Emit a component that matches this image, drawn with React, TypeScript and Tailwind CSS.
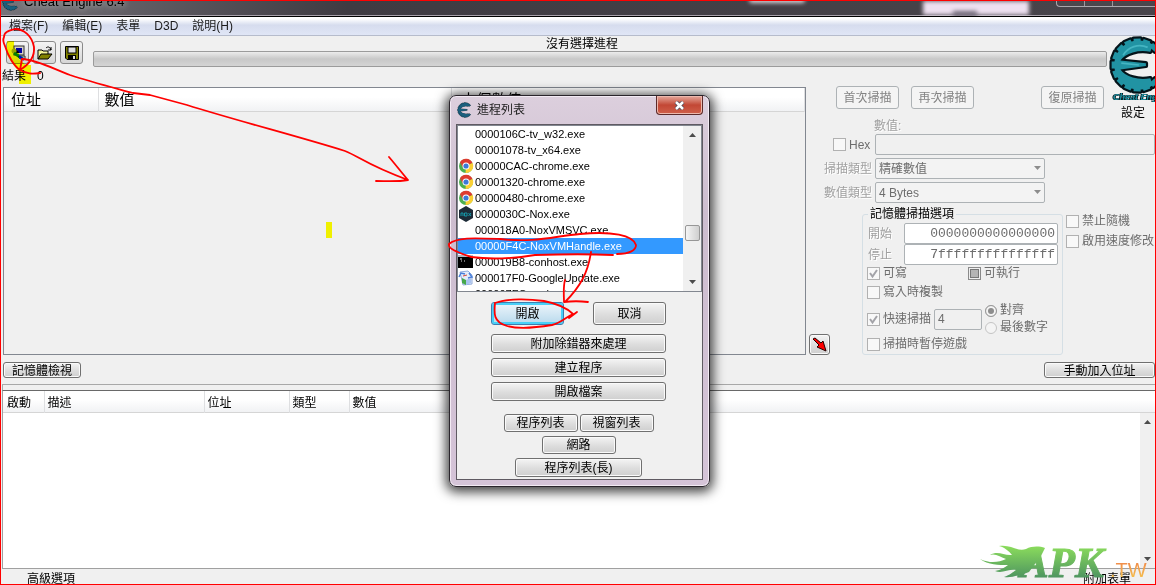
import { useState, type ReactNode } from "react";

type Process = {
  label: string;
  icon?: "chrome" | "nox" | "console" | "update";
};

const processes: Process[] = [
  { label: "0000106C-tv_w32.exe" },
  { label: "00001078-tv_x64.exe" },
  { label: "00000CAC-chrome.exe", icon: "chrome" },
  { label: "00001320-chrome.exe", icon: "chrome" },
  { label: "00000480-chrome.exe", icon: "chrome" },
  { label: "0000030C-Nox.exe", icon: "nox" },
  { label: "000018A0-NoxVMSVC.exe" },
  { label: "00000F4C-NoxVMHandle.exe" },
  { label: "000019B8-conhost.exe", icon: "console" },
  { label: "000017F0-GoogleUpdate.exe", icon: "update" },
  { label: "000007FC-svchost.exe" },
];

const buttonBase =
  "rounded-[3px] border border-[#707070] bg-linear-to-b from-[#f4f4f4] from-0% via-[#dddddd] via-55% to-[#cfcfcf] text-center leading-4 text-black shadow-[inset_0_0_0_1px_#fafafa]";

function GearLogo({ className, dark }: { className: string; dark?: boolean }) {
  const teeth = Array.from({ length: 13 }, (_, i) => 48 + i * 22);
  const fill = dark ? "#1b5f7d" : "#2193a3";
  const ring = "M50 10 A28 28 0 1 0 50 56 L47 48 A28 18 0 0 1 13 38 L42 34 L42 31 L13 28 A28 18 0 0 1 47 18 Z";
  return (
    <svg className={className} viewBox="0 0 66 66" aria-hidden="true">
      <g stroke="#05141a" strokeWidth={dark ? 2 : 5} strokeLinejoin="round" fill={fill}>
        {teeth.map((a) => (
          <rect key={a} x="57" y="29" width="6" height="8" transform={`rotate(${a} 33 33)`} />
        ))}
        <path d={ring} />
      </g>
      <g fill={fill}>
        {teeth.map((a) => (
          <rect key={a} x="57" y="29" width="6" height="8" transform={`rotate(${a} 33 33)`} />
        ))}
        <path d={ring} />
      </g>
      {!dark && <path d="M16 22 A22 22 0 0 1 44 13 M14 31 L34 33" fill="none" stroke="#45b5c2" strokeWidth="2" />}
    </svg>
  );
}

function ProcessIcon({ icon }: { icon?: Process["icon"] }) {
  if (icon === "chrome") {
    return (
      <svg className="size-4" viewBox="0 0 16 16" aria-hidden="true">
        <circle cx="8" cy="8" r="7" fill="#4caf50" />
        <path d="M8 8 L1.9 4.5 A7 7 0 0 1 14.5 5 Z" fill="#de3b30" />
        <path d="M8 8 L14.5 5 A7 7 0 0 1 7.5 15 Z" fill="#fbd034" />
        <path d="M2 4.500 L5 9.500 L8 8 Z" fill="#de3b30" />
        <circle cx="8" cy="8" r="3.500" fill="#fff" />
        <circle cx="8" cy="8" r="2.600" fill="#3b79d8" />
      </svg>
    );
  }
  if (icon === "nox") {
    return (
      <svg className="size-4" viewBox="0 0 16 16" aria-hidden="true">
        <path d="M8 0 L15 4 V12 L8 16 L1 12 V4 Z" fill="#1d2b37" />
        <path d="M3 10 V7 H5 V10 M6.500 7 H9 V10 H6.500 Z M10.500 7 L13 10 M13 7 L10.500 10" fill="none" stroke="#1597a8" strokeWidth="1" />
      </svg>
    );
  }
  if (icon === "console") {
    return (
      <svg className="size-4" viewBox="0 0 16 16" aria-hidden="true">
        <rect x="0" y="2" width="15" height="12" fill="#000" />
        <rect x="0" y="1" width="15" height="2" fill="#aeb9c6" />
        <path d="M2 5 H4 M3 7 H4 M6 7 H7" stroke="#ddd" />
      </svg>
    );
  }
  if (icon === "update") {
    return (
      <svg className="size-4" viewBox="0 0 16 16" aria-hidden="true">
        <path d="M2 2 L10 1 L14 5 V14 L5 15 Z" fill="#e3ecfa" stroke="#8fabdd" />
        <path d="M1 7 L3 3 L7 4 M11 3 L14 7 L10 8" fill="none" stroke="#4a7fd8" strokeWidth="1.500" />
        <path d="M4 8 L8 10 V15 L4 13 Z" fill="#46a84a" />
        <path d="M8 10 L13 8 V13 L8 15 Z" fill="#a9c3f0" />
        <path d="M5 6 L9 5" stroke="#d64a3a" />
      </svg>
    );
  }
  return <span className="size-4" />;
}

function Check({
  children,
  mark,
}: {
  children: ReactNode;
  mark?: "check" | "filled";
}) {
  return (
    <label className="flex h-4 items-center gap-[3px] whitespace-nowrap text-[#6d6d6d]">
      <span className="relative size-[13px] shrink-0">
        <input
          type="checkbox"
          disabled
          checked={mark === "check"}
          readOnly
          className="block size-[13px] appearance-none border border-[#b1b1b1] bg-[#f8f8f8]"
        />
        {mark === "check" && (
          <svg className="absolute inset-0" viewBox="0 0 13 13" aria-hidden="true">
            <path d="M3 6 L5.500 9.500 L10 3" fill="none" stroke="#a3a3a8" strokeWidth="2" />
          </svg>
        )}
        {mark === "filled" && (
          <svg className="absolute inset-0" viewBox="0 0 13 13" aria-hidden="true">
            <rect x="0.500" y="0.500" width="12" height="12" fill="#eee" stroke="#8a8a8a" />
            <rect x="2.500" y="2.500" width="8" height="8" fill="#b4b4b4" stroke="#777" />
          </svg>
        )}
      </span>
      {children}
    </label>
  );
}

function ScanRadio({ children, checked }: { children: ReactNode; checked?: boolean }) {
  return (
    <label className="flex items-center gap-[3px] whitespace-nowrap leading-[17px] text-[#6d6d6d]">
      <span className="relative size-3">
        <input
          type="radio"
          name="alignment"
          disabled
          checked={!!checked}
          readOnly
          className="block size-3 appearance-none rounded-full border border-[#c4c4c4] bg-[#f4f4f4]"
        />
        {checked && (
          <svg className="absolute inset-0" viewBox="0 0 12 12" aria-hidden="true">
            <circle cx="6" cy="6" r="5.500" fill="none" stroke="#999" />
            <circle cx="6" cy="6" r="3" fill="#8d8d8d" />
          </svg>
        )}
      </span>
      {children}
    </label>
  );
}

function ScanSelect({ id, value }: { id: string; value: string }) {
  return (
    <div className="relative w-[170px]">
      <select
        id={id}
        disabled
        className="block h-[21px] w-full appearance-none rounded-[2px] border border-[#adb2b5] bg-[#f3f3f3] px-[3px] text-[#6d6d6d] opacity-100"
      >
        <option>{value}</option>
      </select>
      <svg className="absolute right-1 top-2 h-1 w-[7px]" viewBox="0 0 7 4" aria-hidden="true">
        <path d="M0 0 H7 L3.500 4 Z" fill="#8c8c8c" />
      </svg>
    </div>
  );
}

function ScrollArrow({ up }: { up?: boolean }) {
  return (
    <svg className="h-1 w-[7px]" viewBox="0 0 7 4" aria-hidden="true">
      <path d={up ? "M0 4 H7 L3.500 0 Z" : "M0 0 H7 L3.500 4 Z"} fill="#4c4c4c" />
    </svg>
  );
}

function TitleBar() {
  return (
    <header className="relative flex h-4 items-start justify-between overflow-hidden border-b border-black bg-linear-to-r from-[#77747a] via-[#3f3b42] via-30% to-[#49454b] shadow-[inset_0_-1px_0_#a9a2ab]">
      <div className="-mt-2 flex items-center gap-1 pl-px">
        <GearLogo className="size-[18px]" dark />
        <span className="text-[13px] leading-4 text-black [text-shadow:0_0_6px_#bbb,0_0_10px_#999]">Cheat Engine 6.4</span>
      </div>
      <div className="absolute -top-1 right-[350px] h-1.5 w-14 rounded-full bg-[#d8d2d8] blur-[2px]" />
      <div className="absolute right-[126px] top-0 h-[14px] w-[106px] bg-[#eee0f0] blur-[2px]" />
      <div className="absolute right-[178px] top-2.5 h-1.5 w-6 bg-[#756d7c] blur-[2px]" />
      <div className="flex h-1.5 w-[99px] divide-x divide-[#9c989e] rounded-bl border border-r-0 border-t-0 border-[#aaa6ac] bg-[#4b474d]">
        <button type="button" aria-label="最小化" className="w-7" />
        <button type="button" aria-label="最大化" className="w-7" />
        <button type="button" aria-label="關閉" className="flex-1" />
      </div>
    </header>
  );
}

function MenuBar() {
  return (
    <nav className="flex h-[19px] items-center gap-[14px] border-b border-[#b6bccc] bg-linear-to-b from-white from-10% via-[#d6dcee] via-45% to-[#e0e6f6] pl-2 text-[#1b1b1b]">
      <a href="#file">檔案(F)</a>
      <a href="#edit">編輯(E)</a>
      <a href="#table">表單</a>
      <a href="#d3d">D3D</a>
      <a href="#help">說明(H)</a>
    </nav>
  );
}

function ToolBar() {
  const tool =
    "flex size-[23px] items-center justify-center rounded-[3px] border border-[#8a8a8a] bg-linear-to-b from-[#f4f4f4] to-[#d6d6d6]";
  return (
    <div className="col-span-2 h-[49px] pl-px">
      <div className="flex pl-1 pt-[5px]">
        <div className="flex gap-1">
          <button type="button" aria-label="開啟程序" className={tool}>
            <svg className="size-4" viewBox="0 0 16 16" aria-hidden="true">
              <rect x="4" y="1" width="10" height="9" fill="#d4d0c8" stroke="#333" />
              <rect x="6" y="3" width="6" height="5" fill="#0000a0" />
              <path d="M7 11 H15 V14 H10 Z" fill="#d4d0c8" stroke="#333" />
              <circle cx="4" cy="6" r="2.500" fill="#9aa51b" />
              <path d="M4 8 L13 14" stroke="#008080" strokeWidth="3" />
              <path d="M9 11 L14 15" stroke="#0000c0" strokeWidth="2" />
            </svg>
          </button>
          <button type="button" aria-label="開啟檔案" className={tool}>
            <svg className="size-4" viewBox="0 0 16 16" aria-hidden="true">
              <path d="M1 14 V5 H5 L6 6 H11 V9" fill="#f5f59a" stroke="#000" />
              <path d="M1 14 L4 9 H15 L11 14 Z" fill="#808000" stroke="#000" />
              <path d="M9 3 C11 1 13 2 14 5 M14 2 V5 H11" fill="none" stroke="#000" />
            </svg>
          </button>
          <button type="button" aria-label="儲存" className={tool}>
            <svg className="size-4" viewBox="0 0 16 16" aria-hidden="true">
              <path d="M1.500 1.500 H14.500 V14.500 H3 L1.500 13 Z" fill="#808000" stroke="#000" />
              <rect x="4" y="2" width="8" height="6" fill="#dedede" stroke="#000" />
              <rect x="4" y="10" width="8" height="4" fill="#000" />
              <rect x="9" y="11" width="2" height="3" fill="#ddd" />
            </svg>
          </button>
        </div>
        <div className="ml-[10px] flex-1">
          <p className="-mt-1 pr-9 text-center leading-[14px]">沒有選擇進程</p>
          <div
            role="progressbar"
            aria-label="掃描進度"
            className="h-4 rounded-[2px] border border-[#9b9b9b] bg-linear-to-b from-[#ececec] via-[#c8c8c8] via-50% to-[#d4d4d4]"
          />
        </div>
      </div>
      <p className="flex gap-[11px] pt-px leading-4">
        <span>結果</span>
        <span>0</span>
      </p>
    </div>
  );
}

function ScanForm() {
  return (
    <section className="col-span-2 pt-px leading-4 text-[#a0a0a0]">
      <label htmlFor="scan-value" className="block pl-11 [text-shadow:1px_1px_0_#fff]">
        數值:
      </label>
      <div className="flex items-center gap-[6px] pl-[3px]">
        <div className="w-9">
          <Check>Hex</Check>
        </div>
        <input id="scan-value" disabled className="h-[21px] min-w-0 flex-1 rounded-[2px] border border-[#adb2b5] bg-[#f0f0f0]" />
      </div>
      <div className="mt-[3px] grid grid-cols-[45px_170px] gap-y-[3px]">
        <label htmlFor="scan-type" className="-ml-2 self-center whitespace-nowrap pr-[3px] text-right [text-shadow:1px_1px_0_#fff]">
          掃描類型
        </label>
        <ScanSelect id="scan-type" value="精確數值" />
        <label htmlFor="value-type" className="-ml-2 self-center whitespace-nowrap pr-[3px] text-right [text-shadow:1px_1px_0_#fff]">
          數值類型
        </label>
        <ScanSelect id="value-type" value="4 Bytes" />
      </div>

      <div className="flex gap-[3px] pl-8 pt-[2px]">
        <fieldset className="h-[150px] w-[201px] shrink-0 rounded-[3px] border border-[#d5dfe5] px-1">
          <legend className="ml-px px-[2px] leading-[18px] text-black">記憶體掃描選項</legend>
          <div className="grid grid-cols-[37px_1fr] items-center [text-shadow:1px_1px_0_#fff]">
            <label htmlFor="range-start" className="pl-px">開始</label>
            <input
              id="range-start"
              disabled
              defaultValue="0000000000000000"
              className="h-[21px] w-full rounded-[2px] border border-[#adb2b5] bg-white px-[2px] text-right font-['Liberation_Mono',monospace] text-[13px] text-[#6d6d6d]"
            />
            <label htmlFor="range-stop" className="pl-px">停止</label>
            <input
              id="range-stop"
              disabled
              defaultValue="7fffffffffffffff"
              className="h-[21px] w-full rounded-[2px] border border-[#adb2b5] bg-white px-[2px] text-right font-['Liberation_Mono',monospace] text-[13px] text-[#6d6d6d]"
            />
          </div>
          <div className="grid grid-cols-[101px_1fr]">
            <Check mark="check">可寫</Check>
            <Check mark="filled">可執行</Check>
          </div>
          <div className="mt-[3px]">
            <Check>寫入時複製</Check>
          </div>
          <div className="flex items-center gap-[3px] pt-[2px]">
            <Check mark="check">快速掃描</Check>
            <input
              aria-label="快速掃描對齊值"
              disabled
              defaultValue="4"
              className="h-[21px] w-12 rounded-[2px] border border-[#adb2b5] bg-[#f0f0f0] px-[3px] text-[#6d6d6d]"
            />
            <div>
              <ScanRadio checked>對齊</ScanRadio>
              <ScanRadio>最後數字</ScanRadio>
            </div>
          </div>
          <Check>掃描時暫停遊戲</Check>
        </fieldset>
        <div className="flex flex-col gap-1 pt-2">
          <Check>禁止隨機</Check>
          <Check>啟用速度修改</Check>
        </div>
      </div>
    </section>
  );
}

function ProcessDialog() {
  const [selected, setSelected] = useState("00000F4C-NoxVMHandle.exe");

  return (
    <div
      role="dialog"
      aria-label="進程列表"
      className="absolute left-[448px] top-[94px] w-[261px] rounded-[7px] border border-[#2a252c] bg-linear-to-b from-[#dccfdd] via-[#cdbdcf] via-30% to-[#d5c4d8] px-[6px] pb-[6px] shadow-[0_2px_12px_3px_rgba(0,0,0,0.75),inset_0_0_0_1px_#f3ebf4]"
    >
      <div className="flex h-7 items-center gap-1 pl-px text-[#1d1d1d]">
        <GearLogo className="size-4" dark />
        <span>進程列表</span>
        <button
          type="button"
          aria-label="關閉"
          className="ml-auto flex h-[19px] w-[47px] items-center justify-center self-start rounded-b-[4px] border border-t-0 border-[#5c2a2a] bg-linear-to-b from-[#e3a79c] via-[#c24735] via-50% to-[#d0604a] shadow-[inset_0_0_0_1px_#edb8ac]"
        >
          <svg className="h-[9px] w-[11px]" viewBox="0 0 11 9" aria-hidden="true">
            <path d="M2 1 L9 8 M9 1 L2 8" stroke="#4d4a58" strokeWidth="4" />
            <path d="M2 1 L9 8 M9 1 L2 8" stroke="#fff" strokeWidth="2.500" />
          </svg>
        </button>
      </div>

      <div className="border border-[#5f5a62] bg-[#f0f0f0] pb-[2px]">
        <div className="flex h-[167px] overflow-hidden border border-[#828790] bg-white">
          <ul role="listbox" aria-label="進程列表" className="flex-1 overflow-hidden">
            {processes.map((p) => (
              <li
                key={p.label}
                role="option"
                aria-selected={p.label === selected}
                onClick={() => setSelected(p.label)}
                className={
                  p.label === selected
                    ? "flex h-4 items-center gap-px bg-[#3399ff] text-[11px] text-white"
                    : "flex h-4 items-center gap-px text-[11px] text-black"
                }
              >
                <ProcessIcon icon={p.icon} />
                {p.label}
              </li>
            ))}
          </ul>
          <div className="flex w-[18px] flex-col items-center bg-[#f0f0f0] py-[7px]">
            <ScrollArrow up />
            <div className="mt-[88px] h-4 w-[15px] rounded-[2px] border border-[#979797] bg-linear-to-r from-[#f5f5f5] to-[#cfcfcf]" />
            <div className="mt-auto">
              <ScrollArrow />
            </div>
          </div>
        </div>

        <div className="flex flex-col items-center pr-[2px]">
          <div className="flex w-[175px] flex-col gap-[5px] pt-[10px]">
            <div className="mb-1 flex justify-between">
              <button
                type="button"
                className="h-[23px] w-[73px] rounded-[3px] border border-[#3c7fb1] bg-linear-to-b from-[#eef6fb] via-[#d0e6f3] via-55% to-[#b8d9ec] leading-4 text-black shadow-[inset_0_0_0_2px_#48d0f8]"
              >
                開啟
              </button>
              <button type="button" className={`h-[23px] w-[73px] ${buttonBase}`}>取消</button>
            </div>
            <button type="button" className={`h-[19px] ${buttonBase}`}>附加除錯器來處理</button>
            <button type="button" className={`h-[19px] ${buttonBase}`}>建立程序</button>
            <button type="button" className={`h-[19px] ${buttonBase}`}>開啟檔案</button>
          </div>
          <div className="flex flex-col items-center gap-1 pt-[13px]">
            <div className="flex gap-[2px]">
              <button type="button" className={`h-[18px] w-[74px] ${buttonBase}`}>程序列表</button>
              <button type="button" className={`h-[18px] w-[74px] ${buttonBase}`}>視窗列表</button>
            </div>
            <button type="button" className={`h-[18px] w-[74px] ${buttonBase}`}>網路</button>
            <button type="button" className={`h-[19px] w-[127px] ${buttonBase}`}>程序列表(長)</button>
          </div>
        </div>
      </div>
    </div>
  );
}

function Watermark() {
  return (
    <svg className="pointer-events-none absolute bottom-0 right-0 h-10 w-[176px]" viewBox="0 0 176 40" aria-label="APK.TW">
      <defs>
        <linearGradient id="apk" gradientUnits="userSpaceOnUse" x1="0" y1="2" x2="0" y2="34">
          <stop offset="0" stopColor="#8bdc5c" />
          <stop offset="1" stopColor="#4d9460" />
        </linearGradient>
        <linearGradient id="tw" gradientUnits="userSpaceOnUse" x1="0" y1="18" x2="0" y2="34">
          <stop offset="0" stopColor="#f08a4b" />
          <stop offset="1" stopColor="#f5c04c" />
        </linearGradient>
      </defs>
      <path
        d="M1 15 C12 20 20 18 27 15 C22 13 16 9 11 11 C19 6 25 12 33 11 C30 7 25 3 20 2 C32 0 38 8 47 5 C53 2 60 2 66 4 L62 12 L50 28 L42 31 C36 32 31 34 25 33 C31 31 34 28 37 26 C29 25 23 30 16 27 C22 26 26 23 29 21 C20 21 9 21 1 15 Z"
        fill="url(#apk)"
      />
      <text x="41" y="33" fill="url(#apk)" stroke="url(#apk)" strokeWidth="1" className="font-['Liberation_Serif',serif] text-[43px] font-bold italic">
        APK
      </text>
      <text x="131" y="33" fill="url(#tw)" className="font-['Liberation_Sans',sans-serif] text-[20px]">
        .TW
      </text>
    </svg>
  );
}

function Markup() {
  return (
    <svg className="pointer-events-none absolute left-0 top-0 h-[585px] w-[1156px] mix-blend-multiply" viewBox="1 1 1156 585" aria-hidden="true">
      <g fill="#ffff00">
        <path d="M7 41 H14 V48 L19 52 V59 L26 65 H31 V84 H19 V72 L12 63 L7 55 Z" />
        <rect x="326" y="222" width="6" height="16" />
      </g>
    </svg>
  );
}

function Strokes() {
  return (
    <svg className="pointer-events-none absolute left-0 top-0 h-[585px] w-[1156px]" viewBox="1 1 1156 585" aria-hidden="true">
      <g fill="none" stroke="#f00" strokeWidth="1.800" strokeLinecap="round" strokeLinejoin="round">
        <path d="M4 37 C4 32 8 31 15 29 C24 29 32 36 34 47 C35 57 28 65 20 70 C14 66 8 56 5 46 C3 42 3 39 4 37 M20 70 L22 59 M20 70 C27 74 32 74 40 73" />
        <path d="M22 59 C35 59 54 69 70 75 C91 82 111 87 133 93 L150 95 L187 105 C238 121 297 136 345 151 C360 157 367 165 408 180 M389 157 C395 164 402 173 408 180 M408 180 C397 182 386 181 376 181" />
        <path d="M471 257 C457 252 448 249 449 244 C456 237 475 238 500 239 C535 243 555 236 580 234 C612 231 633 235 636 245 C636 250 630 254 617 254 M613 255 C592 254 565 254 535 255 C510 259 486 259 471 257" />
        <path d="M591 252 C588 273 580 287 565 302 M565 280 C563 287 564 296 564 302 C572 301 580 301 588 302" />
        <path d="M495 303 C508 298 530 299 544 301 C559 304 568 309 573 314 C566 317 561 323 552 325 C534 328 518 329 507 326 C493 322 494 313 495 303 M569 318 L577 312" />
      </g>
    </svg>
  );
}

export default function App() {
  const head = "border-r border-[#dedfe1] text-left font-normal";
  return (
    <main className="relative flex min-h-screen flex-col overflow-hidden border border-[#f00] bg-[#f0f0f0] font-['Liberation_Sans','Noto_Sans_CJK_TC',sans-serif] text-xs text-black">
      <TitleBar />
      <MenuBar />

      <div className="grid grid-cols-[1fr_277px_48px] grid-rows-[49px_32px_auto]">
        <ToolBar />
        <a href="#settings" className="row-span-2 flex h-[81px] flex-col items-start pl-[2px]">
          <GearLogo className="size-[58px] shrink-0" />
          <span className="-mt-px ml-1 whitespace-nowrap text-[9px] font-bold italic leading-[9px] text-[#16899a] [text-shadow:1px_0_#061a20,-1px_0_#061a20]">
            Cheat Engine
          </span>
          <span className="ml-3 mt-[3px] leading-4">設定</span>
        </a>

        <div className="row-span-2 flex items-end gap-[3px] pl-[2px]">
          <div className="h-[268px] flex-1 border border-[#828790]">
            <table className="w-full table-fixed border-collapse bg-linear-to-b from-white from-40% to-[#f1f2f4]">
              <thead>
                <tr className="h-[23px] border-b border-[#d5d5d5] text-[15px] leading-5">
                  <th className={`w-[94px] pl-[7px] pt-px ${head}`}>位址</th>
                  <th className={`w-[353px] pl-[6px] pt-px ${head}`}>數值</th>
                  <th className={`pl-[10px] pt-px ${head}`}>上個數值</th>
                </tr>
              </thead>
            </table>
          </div>
          <button type="button" aria-label="加入選取位址" className={`flex size-[21px] items-center justify-center ${buttonBase}`}>
            <svg className="size-[15px]" viewBox="0 0 15 15" aria-hidden="true">
              <path d="M1 2 L3 1 L9 6 L11 4 L14 14 L5 10 L7 8 Z" fill="#f00" stroke="#200" />
            </svg>
          </button>
        </div>

        <div className="flex items-start gap-3 pl-[6px] pt-px">
          <button type="button" disabled className="h-[23px] w-[63px] rounded-[3px] border border-[#adb2b5] bg-[#f4f4f4] text-[#838383]">首次掃描</button>
          <button type="button" disabled className="h-[23px] w-[63px] rounded-[3px] border border-[#adb2b5] bg-[#f4f4f4] text-[#838383]">再次掃描</button>
          <button type="button" disabled className="ml-auto mr-[3px] h-[23px] w-[63px] rounded-[3px] border border-[#adb2b5] bg-[#f4f4f4] text-[#838383]">復原掃描</button>
        </div>
        <ScanForm />
      </div>

      <div className="flex items-start justify-between pb-[6px] pl-[2px] pt-[7px]">
        <button type="button" className={`h-4 w-[78px] ${buttonBase}`}>記憶體檢視</button>
        <button type="button" className={`h-4 w-[111px] ${buttonBase}`}>手動加入位址</button>
      </div>
      <div className="ml-px h-[6px] border-l border-t border-[#a8a8a8]" />

      <section className="ml-px flex flex-1 flex-col border-b border-l border-t border-[#a0a0a0] border-t-[#696969] bg-white">
        <table className="w-full table-fixed border-collapse bg-linear-to-b from-white from-40% to-[#f1f2f4]">
          <thead>
            <tr className="h-[21px] border-b border-[#d5d5d5] leading-4">
              <th className={`w-[41px] pl-1 pt-[3px] ${head}`}>啟動</th>
              <th className={`w-40 pl-[3px] pt-[3px] ${head}`}>描述</th>
              <th className={`w-[85px] pl-[3px] pt-[3px] ${head}`}>位址</th>
              <th className={`w-[60px] pl-[3px] pt-[3px] ${head}`}>類型</th>
              <th className="pl-[3px] pt-[3px] text-left font-normal">數值</th>
            </tr>
          </thead>
        </table>
        <div className="ml-auto flex w-[15px] flex-1 flex-col items-center justify-between bg-[#f0f0f0] py-[7px]">
          <ScrollArrow up />
          <ScrollArrow />
        </div>
      </section>

      <footer className="flex h-[15px] items-center justify-between pl-[26px] pr-6 pt-1">
        <a href="#advanced">高級選項</a>
        <a href="#comments">附加表單</a>
      </footer>

      <Watermark />
      <Markup />
      <ProcessDialog />
      <Strokes />
    </main>
  );
}
